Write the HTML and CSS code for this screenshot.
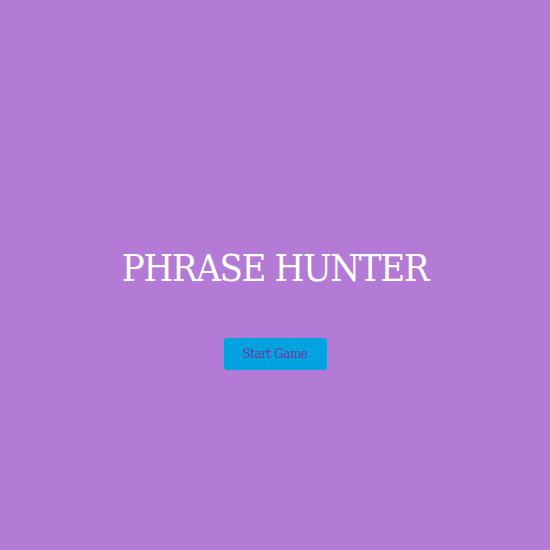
FILE: index.html
```html
<!DOCTYPE html>
<html lang="en">
<head>
<meta charset="utf-8">
<title>Phrase Hunter</title>
<link rel="stylesheet" href="styles.css">
</head>
<body>
<div class="overlay">
  <h2 class="title">PHRASE HUNTER</h2>
  <button class="btn-reset">Start Game</button>
</div>
</body>
</html>
```
FILE: styles.css
```css
html, body {
  margin: 0;
  padding: 0;
  height: 100%;
}
body {
  background: #b37ad6;
  font-family: "DejaVu Serif", "Liberation Serif", serif;
}
.overlay {
  height: 100%;
  display: flex;
  flex-direction: column;
  align-items: center;
  justify-content: center;
  padding-top: 66px;
  box-sizing: border-box;
}
.title {
  margin: 0;
  color: #ffffff;
  font-weight: 300;
  font-size: 38px;
  line-height: 44px;
  letter-spacing: -1.4px;
  font-stretch: condensed;
}
.btn-reset {
  margin-top: 48px;
  width: 103px;
  height: 32px;
  border: none;
  border-radius: 3px;
  background: #00a3e0;
  color: #6e3a9c;
  font-family: "DejaVu Serif", "Liberation Serif", serif;
  font-size: 12px;
  letter-spacing: -0.5px;
  padding: 0;
}
```
